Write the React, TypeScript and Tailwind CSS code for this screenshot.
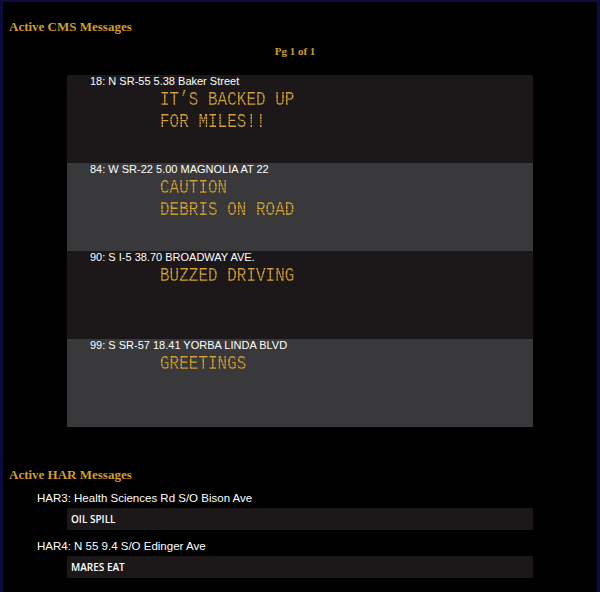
import React from "react";

type CmsSign = {
  label: string;
  lines: string[];
};

const cmsSigns: CmsSign[] = [
  { label: "18: N SR-55 5.38 Baker Street", lines: ["IT’S BACKED UP", "FOR MILES!!"] },
  { label: "84: W SR-22 5.00 MAGNOLIA AT 22", lines: ["CAUTION", "DEBRIS ON ROAD"] },
  { label: "90: S I-5 38.70 BROADWAY AVE.", lines: ["BUZZED DRIVING"] },
  { label: "99: S SR-57 18.41 YORBA LINDA BLVD", lines: ["GREETINGS"] },
];

const harMessages = [
  { label: "HAR3: Health Sciences Rd S/O Bison Ave", text: "OIL SPILL" },
  { label: "HAR4: N 55 9.4 S/O Edinger Ave", text: "MARES EAT" },
];

function SectionTitle({ children }: { children: React.ReactNode }) {
  return (
    <h2 className="font-['Liberation_Serif',serif] text-[13px] leading-[16px] font-bold text-[#d09e2b]">
      {children}
    </h2>
  );
}

function CmsRow({ sign, shaded }: { sign: CmsSign; shaded: boolean }) {
  return (
    <div className={`h-[88px] ${shaded ? "bg-[#39393b]" : "bg-[#1c1819]"}`}>
      <div className="pl-[23px] font-['Liberation_Sans',Arial,sans-serif] text-[11px] leading-[13px] text-white">
        {sign.label}
      </div>
      {/* LED sign text, striped to look like a dot matrix */}
      <div className="mt-[1px] pl-[93px] origin-top scale-y-[1.24] font-['Liberation_Mono',monospace] text-[16px] leading-[18px] whitespace-pre">
        {sign.lines.map((line) => (
          <div
            key={line}
            className="w-fit bg-[repeating-linear-gradient(180deg,#d6a435_0px,#d6a435_1.6px,#735a24_1.6px,#735a24_2.2px)] bg-clip-text text-transparent"
          >
            {line}
          </div>
        ))}
      </div>
    </div>
  );
}

export default function App() {
  return (
    <div className="h-[592px] w-[600px] overflow-hidden bg-black border-t-2 border-x-[3px] border-[#0b0b3d]">
      <div className="pl-[6px] pt-[17px]">
        <SectionTitle>Active CMS Messages</SectionTitle>
      </div>

      <div className="mt-[9px] pr-[10px] text-center font-['Liberation_Serif',serif] text-[11px] leading-[14px] font-bold text-[#c9a027]">
        Pg 1 of 1
      </div>

      <div className="mt-[17px] ml-[64px] w-[466px]">
        {cmsSigns.map((sign, i) => (
          <CmsRow key={sign.label} sign={sign} shaded={i % 2 === 1} />
        ))}
      </div>

      <div className="pl-[6px] mt-[40px]">
        <SectionTitle>Active HAR Messages</SectionTitle>
      </div>

      <div className="mt-[9px]">
        {harMessages.map((har) => (
          <div key={har.label} className="mb-[10px]">
            <div className="pl-[34px] font-['Liberation_Sans',Arial,sans-serif] text-[11.5px] leading-[13px] text-white">
              {har.label}
            </div>
            <div className="mt-[3px] ml-[64px] w-[466px] h-[22px] bg-[#1c1819] pl-[4px] font-['Open_Sans',sans-serif] text-[10px] leading-[22px] font-semibold text-white">
              {har.text}
            </div>
          </div>
        ))}
      </div>
    </div>
  );
}
